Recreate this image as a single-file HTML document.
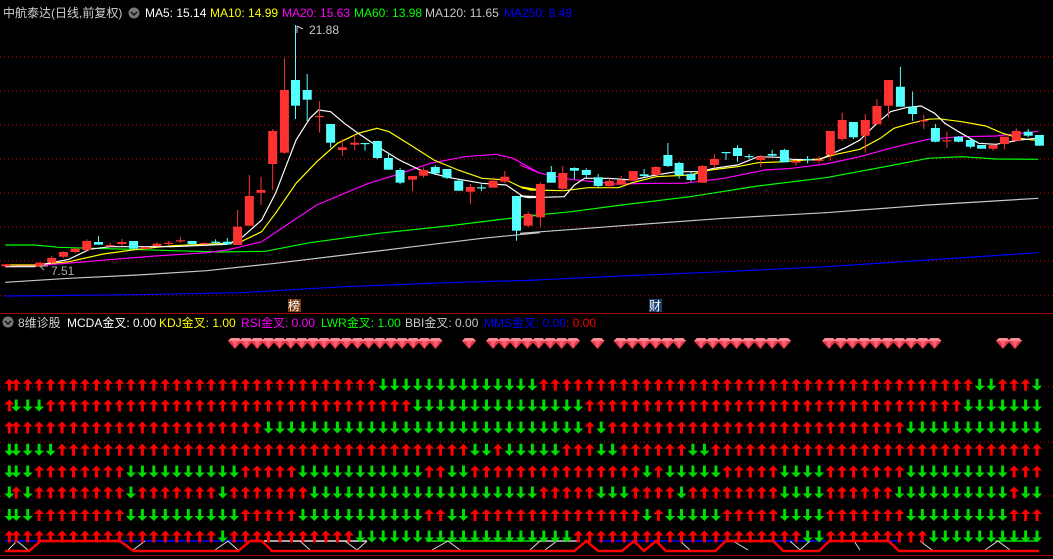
<!DOCTYPE html>
<html><head><meta charset="utf-8">
<style>
html,body{margin:0;padding:0;background:#000;width:1053px;height:559px;overflow:hidden}
svg{display:block}
text{font-family:"Liberation Sans","Noto Sans CJK SC",sans-serif;font-size:12px}
</style></head>
<body>
<svg id="s" width="1053" height="559" xmlns="http://www.w3.org/2000/svg">
<g id="grid" stroke="#c00000" stroke-width="1" stroke-dasharray="1,3"></g>
<line x1="0" y1="313.5" x2="1053" y2="313.5" stroke="#a00000"/>
<line x1="0" y1="555.5" x2="1053" y2="555.5" stroke="#a00000"/>
<g id="ma"></g>
<g id="cd"></g>
<g id="bl"></g>
<g id="ar"></g>
<g id="dm"></g>
<text x="3" y="17" fill="#d0d0d0">中航泰达(日线,前复权)</text>
<circle cx="134" cy="13" r="5.5" fill="#777"/><path d="M131 12 l3 3 l3 -3" stroke="#111" stroke-width="1.5" fill="none"/>
<text x="145" y="17" fill="#ffffff">MA5: 15.14</text>
<text x="210" y="17" fill="#ffff00">MA10: 14.99</text>
<text x="282" y="17" fill="#ff00ff">MA20: 15.63</text>
<text x="354" y="17" fill="#00ff00">MA60: 13.98</text>
<text x="425" y="17" fill="#c8c8c8">MA120: 11.65</text>
<text x="504" y="17" fill="#0000ff">MA250: 8.49</text>
<path d="M297 33 V26 M297 26 l6 3" stroke="#ccc" fill="none"/>
<text x="309" y="34" fill="#c8c8c8">21.88</text>
<path d="M40 266 l4 4 M40 266 l8 0" stroke="#aaa" fill="none"/>
<text x="51" y="275" fill="#aaa">7.51</text>
<rect x="288" y="299" width="13" height="13" fill="#7a3a10"/>
<text x="288" y="310" fill="#fff">榜</text>
<rect x="649" y="299" width="13" height="13" fill="#1c3c6c"/>
<text x="649" y="310" fill="#fff">财</text>
<circle cx="8" cy="322" r="5.5" fill="#777"/><path d="M5 321 l3 3 l3 -3" stroke="#111" stroke-width="1.5" fill="none"/>
<text x="18" y="327" fill="#d0d0d0">8维诊股</text>
<text x="67" y="327" fill="#ffffff">MCDA金叉: 0.00</text>
<text x="159" y="327" fill="#ffff00">KDJ金叉: 1.00</text>
<text x="241" y="327" fill="#ff00ff">RSI金叉: 0.00</text>
<text x="321" y="327" fill="#00ff00">LWR金叉: 1.00</text>
<text x="405" y="327" fill="#c8c8c8">BBI金叉: 0.00</text>
<text x="484" y="327" fill="#0000ff">MMS金叉: 0.00</text>
<text x="566" y="327" fill="#ff0000">: 0.00</text>
</svg>
<script>
var NS="http://www.w3.org/2000/svg";
function el(p,t,a){var e=document.createElementNS(NS,t);for(var k in a)e.setAttribute(k,a[k]);p.appendChild(e);return e;}
var G=function(id){return document.getElementById(id)};
[56.7,91,125,159,193,227,261,295.7,386.7,442,496].forEach(function(y){el(G('grid'),'line',{x1:0,x2:1053,y1:y,y2:y});});
function pts(a,b){var r=[];a.forEach(function(p){r.push((p[0]/2.904).toFixed(1)+','+(60+p[1]/3).toFixed(1))});b.forEach(function(p){r.push((520+p[0]/2.942).toFixed(1)+','+(60+p[1]/3).toFixed(1))});return r.join(' ');}
var MA=[
['#0000ff',[[15,708],[400,704],[700,698],[1000,680],[1300,668],[1568,660]],[[0,662],[300,648],[600,635],[900,620],[1200,600],[1525,578]]],
['#c8c8c8',[[15,667],[200,655],[400,645],[600,632],[800,610],[1000,585],[1200,560],[1400,535],[1568,518]],[[0,520],[300,497],[600,475],[900,458],[1200,435],[1525,415]]],
['#00ff00',[[15,555],[100,555],[170,562],[270,565],[380,568],[500,572],[640,576],[770,574],[900,548],[1100,520],[1300,498],[1440,480],[1568,465]],[[0,470],[150,455],[300,435],[500,410],[700,378],[900,353],[1100,315],[1200,295],[1300,290],[1400,297],[1525,298]]],
['#ff00ff',[[15,620],[130,615],[250,605],[330,598],[450,588],[600,578],[660,570],[760,545],[840,490],[920,435],[1000,400],[1070,370],[1150,345],[1250,310],[1350,290],[1440,283],[1490,295],[1568,340]],[[0,315],[60,340],[150,358],[280,372],[400,370],[480,370],[600,355],[720,330],[800,325],[900,312],[1000,290],[1100,262],[1200,238],[1300,230],[1400,228],[1525,214]]],
['#ffff00',[[15,615],[100,615],[200,605],[300,582],[400,568],[500,557],[660,550],[700,545],[760,515],[800,460],[860,370],[920,305],[980,250],[1040,220],[1095,205],[1130,215],[1200,260],[1260,300],[1330,330],[1400,355],[1470,360],[1520,385],[1568,390]],[[0,380],[30,390],[130,392],[200,383],[290,383],[330,368],[400,350],[500,345],[560,330],[640,320],[700,308],[760,306],[880,297],[930,283],[1000,268],[1060,235],[1100,205],[1150,190],[1200,178],[1230,176],[1300,185],[1370,198],[1420,220],[1470,235],[1525,242]]],
['#ffffff',[[15,620],[100,620],[130,612],[200,598],[260,568],[320,560],[400,560],[500,560],[660,553],[700,535],[760,480],[800,400],[860,240],[900,175],[925,150],[960,155],[1000,190],[1040,220],[1100,262],[1160,300],[1220,330],[1300,352],[1400,370],[1470,375],[1520,410],[1568,410]],[[0,408],[25,413],[130,410],[160,375],[190,355],[260,355],[330,360],[400,345],[460,335],[530,335],[570,325],[640,315],[700,290],[760,292],[800,298],[880,300],[920,280],[960,262],[1000,240],[1050,190],[1090,155],[1140,142],[1180,138],[1220,160],[1250,190],[1290,215],[1350,250],[1400,253],[1470,240],[1520,235]]]
];
MA.forEach(function(m){el(G('ma'),'polyline',{points:pts(m[1],m[2]),fill:'none',stroke:m[0],'stroke-width':1.2});});
var C6=[[17,613,619,613,619,'r'],[116,608,620,606,622,'r'],[150,594,608,588,612,'r'],[184,576,590,574,594,'r'],[218,566,576,562,580,'r'],[252,543,570,538,572,'r'],[286,546,554,528,554,'c'],[320,555,557,548,558,'r'],[354,546,552,537,557,'r'],[388,543,566,543,570,'c'],[422,562,567,560,567,'r'],[456,551,558,546,560,'r'],[490,548,550,543,555,'r'],[524,541,543,531,548,'r'],[558,543,552,543,556,'c'],[592,549,551,547,553,'r'],[626,545,547,538,552,'c'],[660,545,553,534,555,'c'],[690,500,555,450,555,'r'],[724,408,497,345,497,'r'],[758,390,398,350,435,'r'],[792,213,312,207,390,'r'],[826,90,278,-5,282,'r'],[858,60,137,-105,177,'c'],[892,90,119,42,183,'c'],[928,168,171,123,218,'r'],[960,192,248,192,263,'c'],[994,262,270,238,288,'r'],[1030,248,254,225,270,'r'],[1060,249,251,249,272,'c'],[1096,243,294,243,298,'c'],[1128,294,329,278,329,'c'],[1162,330,368,324,373,'c'],[1198,348,359,348,393,'r'],[1230,330,347,322,353,'r'],[1264,321,340,316,345,'c'],[1298,327,353,327,357,'c'],[1332,362,392,356,392,'c'],[1366,381,395,372,433,'r'],[1398,382,384,373,393,'c'],[1432,362,383,352,383,'r'],[1466,350,365,333,369,'r'],[1500,408,512,408,542,'c'],[1534,462,497,455,502,'r']];
var C7=[[60,372,472,367,503,'r'],[92,336,368,318,368,'c'],[126,339,386,318,393,'r'],[160,324,332,322,357,'c'],[195,330,345,325,355,'c'],[230,352,378,342,381,'c'],[263,363,378,355,386,'r'],[298,360,374,348,374,'r'],[333,333,362,333,362,'r'],[365,343,348,327,352,'c'],[400,321,345,318,345,'r'],[435,285,318,249,321,'c'],[468,309,345,305,356,'c'],[503,342,360,336,365,'c'],[537,318,368,315,368,'r'],[572,297,315,282,325,'r'],[606,276,278,276,300,'c'],[640,264,288,255,305,'c'],[674,288,290,282,297,'c'],[708,290,300,285,320,'r'],[742,282,287,270,289,'c'],[778,270,307,266,307,'c'],[812,303,308,300,317,'r'],[846,297,299,288,310,'c'],[880,299,301,288,310,'r'],[913,213,285,213,302,'r'],[948,180,237,158,243,'r'],[981,186,232,186,237,'c'],[1016,180,227,162,278,'r'],[1050,138,193,118,193,'r'],[1084,60,137,60,173,'r'],[1119,80,140,20,140,'c'],[1155,140,162,95,182,'c'],[1188,181,183,165,207,'r'],[1222,204,245,192,247,'c'],[1256,241,243,215,263,'r'],[1290,230,245,228,247,'c'],[1325,240,260,237,265,'c'],[1358,255,266,255,266,'c'],[1392,255,266,255,272,'r'],[1425,230,252,230,268,'r'],[1460,213,242,205,245,'r'],[1495,215,227,207,232,'c'],[1528,225,257,225,257,'c']];
function candle(x,d){var col=d[5]=='r'?'#ff3232':'#54ffff';var g=G('cd');
 var bt=60+d[1]/3,bb=60+d[2]/3,wt=60+d[3]/3,wb=60+d[4]/3;
 el(g,'rect',{x:(x-0.5).toFixed(1),y:wt.toFixed(1),width:1,height:Math.max(1,wb-wt).toFixed(1),fill:col});
 el(g,'rect',{x:(x-4.5).toFixed(1),y:bt.toFixed(1),width:9,height:Math.max(1.2,bb-bt).toFixed(1),fill:col});}
C6.forEach(function(d){candle(d[0]/2.904,d)});
C7.forEach(function(d){candle(520+d[0]/2.942,d)});
function arrow(cx,cy,up){var g=G('ar');var col=up?'#ff0000':'#00dd00';
 if(up){el(g,'path',{d:'M'+(cx-5)+' '+(cy-1)+'L'+cx+' '+(cy-6)+'L'+(cx+5)+' '+(cy-1)+'Z',fill:col});el(g,'rect',{x:cx-1.5,y:cy-1.5,width:3,height:7.5,fill:col});}
 else{el(g,'path',{d:'M'+(cx-5)+' '+(cy+1)+'L'+cx+' '+(cy+6)+'L'+(cx+5)+' '+(cy+1)+'Z',fill:col});el(g,'rect',{x:cx-1.5,y:cy-6,width:3,height:7.5,fill:col});}}
function expand(s){var r=[];s.split(' ').forEach(function(t){var c=t[0]=='U',n=parseInt(t.slice(1));for(var i=0;i<n;i++)r.push(c);});return r;}
var R=[
[384.7,true,'U32 D13','D1 U38 D2 U3 D1'],
[405.5,true,'D3 U32 D10','D5 U33 D7'],
[427.5,true,'U22 D23','D5 U1 D1 U26 D12'],
[449.7,false,'D4 U36 D2 U1 D2','D3 U3 D2 U6 D2 U29'],
[471.5,false,'D2 U8 D10 U5 D11 U2 D2 U5','U10 D1 U1 D5 U5 D4 U7 D9 U3'],
[492.5,false,'U1 D1 U8 D1 U7 D1 U7 D19','D1 U5 D3 U4 D1 U8 D4 U6 D10 U1 D2'],
[515,false,'D2 U8 D10 U5 D11 U2 D2 U5','U10 D1 U1 D5 U5 D4 U7 D9 U3'],
[536.5,true,'U18 D1 U11 D15','D4 U20 D2 U9 D10']];
var bl=G('bl');
function ln(p,c,w){el(bl,'polyline',{points:p,stroke:c,'stroke-width':w,fill:'none'});}
ln('5,541 248,541','#0000ff',1.5);ln('264,541 367,541','#e0e0e0',1.5);ln('426,541 540,541','#00dd00',1.5);
ln('540,541 580,541','#c8c8c8',1.5);ln('598,541 727,541','#0000ff',1.5);ln('773,541 826,541','#0000ff',1.5);
ln('889,541 901,541','#0000ff',1.5);ln('995,541 1037,541','#00dd00',1.5);
[[8,550,17,541,28,550],[133,550,145,541],[215,550,228,541,238,550],[300,541,310,550],[345,541,357,550,367,541],[432,550,448,541,460,550],[530,550,540,541],[545,550,557,541],[680,541,690,550],[733,541,748,550],[790,541,800,550,810,541],[854,541,860,550],[920,541,932,550],[985,550,998,541,1010,550]].forEach(function(p){var s=[];for(var i=0;i<p.length;i+=2)s.push(p[i]+','+p[i+1]);ln(s.join(' '),'#ddd',1);});
ln('5,551 29,551 40.6,541 120,541 133.5,551 238.3,551 250,541 262,541 272,551 574.4,551 586.3,541 598.2,551 622,551 633.9,541 644,551 656,541 666,551 715.4,551 725.6,541 773.2,541 783.4,551 819,551 829.3,541 888.8,541 899,551 1039,551','#ff0000',2.5);
R.forEach(function(r){
 arrow(9.3,r[0],r[1]);
 var a=expand(r[2]).concat(expand(r[3]));
 a.forEach(function(u,k){arrow(+(16.2+11.47*k).toFixed(1),r[0],u)});
});
function dia(cx){var g=G('dm');var y=338;
 el(g,'path',{d:'M'+(cx-7)+' '+(y+3)+'L'+(cx-4)+' '+y+'L'+(cx+4)+' '+y+'L'+(cx+7)+' '+(y+3)+'L'+cx+' '+(y+11)+'Z',fill:'#e8384a'});
 el(g,'path',{d:'M'+(cx-7)+' '+(y+3)+'L'+(cx-4)+' '+y+'L'+(cx+4)+' '+y+'L'+(cx+7)+' '+(y+3)+'Z',fill:'#ff8a96'});
 el(g,'path',{d:'M'+(cx-3)+' '+(y+3)+'L'+cx+' '+(y+10)+'L'+(cx+3)+' '+(y+3)+'Z',fill:'#ff6070'});}
function grp(a,b,n){for(var i=0;i<n;i++)dia(n==1?a:a+(b-a)*i/(n-1));}
grp(235,435.5,19);grp(469,469,1);grp(493,573,8);grp(597.5,597.5,1);grp(620.6,679,6);grp(701,784,8);grp(829,934.5,10);grp(1003,1015,2);
</script>
</body></html>
